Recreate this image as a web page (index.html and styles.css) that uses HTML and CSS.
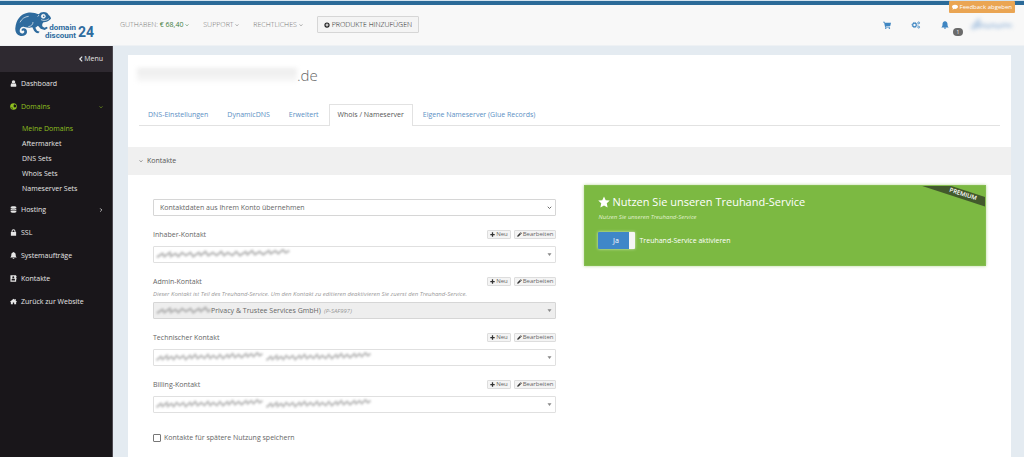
FILE: index.html
```html
<!DOCTYPE html>
<html lang="de">
<head>
<meta charset="utf-8">
<meta name="viewport" content="width=device-width, initial-scale=1">
<title>Whois / Nameserver – domaindiscount24</title>
<link rel="stylesheet" href="styles.css">
</head>
<body>
<svg class="sprite" aria-hidden="true">
  <symbol id="i-down" viewBox="0 0 10 10"><path d="M1.500 3.500 5 7l3.500-3.500" fill="none" stroke="currentColor" stroke-width="1.600"/></symbol>
  <symbol id="i-left" viewBox="0 0 10 10"><path d="M7 1 3 5l4 4" fill="none" stroke="currentColor" stroke-width="2"/></symbol>
  <symbol id="i-right" viewBox="0 0 10 10"><path d="M3 1l4 4-4 4" fill="none" stroke="currentColor" stroke-width="2"/></symbol>
  <symbol id="i-plus-circle" viewBox="0 0 16 16"><path fill-rule="evenodd" d="M8 1a7 7 0 1 0 0 14A7 7 0 0 0 8 1zM6.500 4h3v2.500h2.500v3H9.500V12h-3V9.500H4v-3h2.500z"/></symbol>
  <symbol id="i-cart" viewBox="0 0 16 16"><path d="M0 1.500h3.300l.5 1.800H16l-1.500 6.500-9 .9.200 1H14v1.500H4.300L2.200 3H0z"/><circle cx="5.500" cy="14.300" r="1.500"/><circle cx="12.800" cy="14.300" r="1.500"/></symbol>
  <symbol id="i-cogs" viewBox="0 0 18 16"><g fill="none" stroke="currentColor"><circle cx="6" cy="8" r="3.600" stroke-width="2.400"/><circle cx="6" cy="8" r="5.200" stroke-width="1.600" stroke-dasharray="2 2.080"/><circle cx="14.300" cy="3.800" r="1.900" stroke-width="1.700"/><circle cx="14.300" cy="12.200" r="1.900" stroke-width="1.700"/></g></symbol>
  <symbol id="i-bell" viewBox="0 0 16 16"><path d="M8 0c.8 0 1.200.5 1.200 1.200C11.800 1.800 13 4 13 6.500c0 3.500 1 5 2.500 6.300H.5C2 11.500 3 10 3 6.500 3 4 4.200 1.800 6.800 1.200 6.800.5 7.200 0 8 0zM6 13.500h4c0 1.300-.9 2.200-2 2.200s-2-.9-2-2.200z"/></symbol>
  <symbol id="i-comment" viewBox="0 0 16 16"><path d="M8 2c4.400 0 8 2.400 8 5.500S12.400 13 8 13c-.8 0-1.500 0-2.200-.2C4.500 14 3 15 1 15c1-1 1.500-2 1.400-3.500C.9 10.500 0 9 0 7.500 0 4.400 3.600 2 8 2z"/></symbol>
  <symbol id="i-user" viewBox="0 0 16 16"><circle cx="8" cy="4.500" r="4"/><path d="M4.500 7.500C2 8 1.500 11 1.500 13.500c0 1.300.8 2 2 2h9c1.200 0 2-.7 2-2 0-2.500-.5-5.500-3-6-2 2-5 2-7 0z"/></symbol>
  <symbol id="i-globe" viewBox="0 0 16 16"><circle cx="8" cy="8" r="7.500"/><path d="M9.500 3l4 1.500.5 4-2.500 2L9 9.500 8 6zM3 9.500l2.500 1 .5 3-2-1z" fill="#19161a"/></symbol>
  <symbol id="i-database" viewBox="0 0 16 16"><path d="M1.500 3C1.500 0 14.500 0 14.500 3v1.200c0 3-13 3-13 0zM1.500 6c3 2 10 2 13 0v2.200c0 3-13 3-13 0zM1.500 10c3 2 10 2 13 0v3.200c0 3-13 3-13 0z"/></symbol>
  <symbol id="i-lock" viewBox="0 0 16 16"><path fill-rule="evenodd" d="M2 7h1.500V5a4.500 4.500 0 0 1 9 0v2H14v8.500H2zM5.800 7h4.400V5a2.200 2.200 0 0 0-4.400 0z"/></symbol>
  <symbol id="i-book" viewBox="0 0 16 16"><path fill-rule="evenodd" d="M1 .5h13v15H1zM7.500 3a2.300 2.300 0 1 0 0 4.600A2.300 2.300 0 0 0 7.500 3zM3.500 12.500h8c0-3-1-4-2-4.300-1.200.8-2.800.8-4 0-1 .3-2 1.300-2 4.300z"/><path d="M15 2h1v3h-1zM15 7h1v3h-1z"/></symbol>
  <symbol id="i-home" viewBox="0 0 16 16"><path d="M8 1.500l3 2.600V2.500h2v3.400l3 2.600-1 1-1-.8V14.500H9.500v-4h-3v4H2V8.700l-1 .8-1-1z"/></symbol>
  <symbol id="i-plus" viewBox="0 0 16 16"><path d="M6 1h4v5h5v4h-5v5H6v-5H1V6h5z"/></symbol>
  <symbol id="i-pencil" viewBox="0 0 16 16"><path d="M12 .5 15.500 4 13.500 6 10 2.500zM9 3.500 12.500 7 5 14.500.5 15.500l1-4.500z"/></symbol>
  <symbol id="i-star" viewBox="0 0 16 16"><path d="M8 .5l2.300 5 5.400.6-4 3.700 1.100 5.500L8 12.600l-4.800 2.700 1.100-5.500-4-3.700 5.400-.6z"/></symbol>
  <symbol id="i-caret" viewBox="0 0 10 10"><path d="M1 2.500h8L5 8z"/></symbol>
  <symbol id="scribble" viewBox="0 0 150 12" preserveAspectRatio="none"><path d="M2 9l6-4 2 3 6-4 1 4 5-3 3 3 4-4 4 3 5-3 3 4 6-4 2 3 5-4 3 4 5-3 4 3 5-4 3 4 4-3 5 3 4-4 4 4 6-4 2 3 5-4 3 4 5-3 4 3 6-4 2 3 5-3 3 3 5-4 3 3 4-2" fill="none" stroke="currentColor" stroke-width="2.500"/></symbol>
</svg>

<header class="topbar">
  <a class="logo" href="#" aria-label="domaindiscount24">
    <svg class="chameleon" viewBox="0 0 108 78" aria-hidden="true">
      <path d="M1 48C3 24 16 6 38 2c14-2 24 2 34 5 2-5 8-7 14-7 7 0 13 3 15 9 4 3 7 7 7 11-5 6-13 10-22 11-4 3-5 7-4 12l6 4 8-3 2 5-9 5-12-4-8-9-8 6 5 9 8 3-4 5c-7 0-13-5-15-12l-3-6c-8 2-16 1-24-1-8-2-14 4-14 12 0 9 13 10 14 2 0-4-5-5-7-2-4-5 2-9 7-8 9 2 11 14 3 20C18 77-1 68 1 48z"/>
      <path class="cut" d="M40 44c8-1 14-6 14-14M15 31c5-11 15-17 26-18M78 23c7 4 17 3 24-3M72 9l-4 5"/>
      <circle class="cut eye" cx="85" cy="13" r="6"/><circle cx="86" cy="13" r="2.500"/>
    </svg>
    <span class="logo-name"><span>domain</span><span>discount</span></span>
    <span class="logo-num">24</span>
  </a>
  <nav class="topnav" aria-label="Konto">
    <a href="#">GUTHABEN: <b>€ 68,40</b> <svg class="ic tiny green"><use href="#i-down"/></svg></a>
    <a href="#">SUPPORT <svg class="ic tiny"><use href="#i-down"/></svg></a>
    <a href="#">RECHTLICHES <svg class="ic tiny"><use href="#i-down"/></svg></a>
    <button class="add" type="button"><svg class="ic small"><use href="#i-plus-circle"/></svg>PRODUKTE HINZUFÜGEN</button>
  </nav>
  <div class="tools">
    <a href="#" aria-label="Warenkorb"><svg class="ic tool"><use href="#i-cart"/></svg></a>
    <a href="#" aria-label="Einstellungen"><svg class="ic tool wide"><use href="#i-cogs"/></svg></a>
    <a class="bell" href="#" aria-label="Benachrichtigungen"><svg class="ic tool"><use href="#i-bell"/></svg><span class="badge">1</span></a>
    <a class="account" href="#" aria-label="Benutzerkonto"><svg viewBox="0 0 46 14"><path d="M3 11l6-7v6" fill="none" stroke="currentColor" stroke-width="4"/><path d="M9 9l5-2 5 2 5-2 5 2 6-2 8 1" fill="none" stroke="currentColor" stroke-width="3"/></svg></a>
  </div>
  <button class="feedback" type="button"><svg class="ic small"><use href="#i-comment"/></svg>Feedback abgeben</button>
</header>

<div class="shell">
  <nav class="sidebar" aria-label="Hauptmenü">
    <button class="menu-toggle" type="button"><svg class="ic small"><use href="#i-left"/></svg>Menu</button>
    <ul class="menu">
      <li><a href="#"><svg class="ic item"><use href="#i-user"/></svg>Dashboard</a></li>
      <li class="open"><a href="#"><svg class="ic item"><use href="#i-globe"/></svg>Domains<svg class="ic tiny end"><use href="#i-down"/></svg></a>
        <ul class="submenu">
          <li><a class="current" href="#">Meine Domains</a></li>
          <li><a href="#">Aftermarket</a></li>
          <li><a href="#">DNS Sets</a></li>
          <li><a href="#">Whois Sets</a></li>
          <li><a href="#">Nameserver Sets</a></li>
        </ul>
      </li>
      <li><a href="#"><svg class="ic item"><use href="#i-database"/></svg>Hosting<svg class="ic tiny end"><use href="#i-right"/></svg></a></li>
      <li><a href="#"><svg class="ic item"><use href="#i-lock"/></svg>SSL</a></li>
      <li><a href="#"><svg class="ic item"><use href="#i-bell"/></svg>Systemaufträge</a></li>
      <li><a href="#"><svg class="ic item"><use href="#i-book"/></svg>Kontakte</a></li>
      <li><a href="#"><svg class="ic item"><use href="#i-home"/></svg>Zurück zur Website</a></li>
    </ul>
  </nav>

  <main class="card">
    <h1><span class="masked-name"></span>.de</h1>
    <nav class="tabs" aria-label="Domain">
      <a href="#">DNS-Einstellungen</a>
      <a href="#">DynamicDNS</a>
      <a href="#">Erweitert</a>
      <a class="active" href="#" aria-current="page">Whois / Nameserver</a>
      <a href="#">Eigene Nameserver (Glue Records)</a>
    </nav>
    <h2 class="section-head"><svg class="ic tiny"><use href="#i-down"/></svg>Kontakte</h2>

    <div class="columns">
      <form class="contacts">
        <div class="pick source">
          <select aria-label="Kontaktdaten"><option>Kontaktdaten aus Ihrem Konto übernehmen</option></select>
          <svg class="ic arrow"><use href="#i-down"/></svg>
        </div>

        <div class="field">
          <div class="field-head"><label for="owner">Inhaber-Kontakt</label>
            <button type="button"><svg class="ic micro"><use href="#i-plus"/></svg>Neu</button>
            <button type="button"><svg class="ic micro"><use href="#i-pencil"/></svg>Bearbeiten</button></div>
          <div class="pick"><select id="owner"><option></option></select>
            <svg class="masked" viewBox="0 0 150 12" preserveAspectRatio="none"><use href="#scribble"/></svg>
            <svg class="ic arrow caret"><use href="#i-caret"/></svg></div>
        </div>

        <div class="field">
          <div class="field-head"><label for="admin">Admin-Kontakt</label>
            <button type="button"><svg class="ic micro"><use href="#i-plus"/></svg>Neu</button>
            <button type="button"><svg class="ic micro"><use href="#i-pencil"/></svg>Bearbeiten</button></div>
          <p class="hint">Dieser Kontakt ist Teil des Treuhand-Service. Um den Kontakt zu editieren deaktivieren Sie zuerst den Treuhand-Service.</p>
          <div class="pick locked"><select id="admin" disabled><option>Privacy &amp; Trustee Services GmbH)</option></select>
            <svg class="masked" viewBox="0 0 60 12" preserveAspectRatio="none"><use href="#scribble" width="150" height="12"/></svg>
            <i class="handle">(P-SAF997)</i>
            <svg class="ic arrow caret"><use href="#i-caret"/></svg></div>
        </div>

        <div class="field">
          <div class="field-head"><label for="tech">Technischer Kontakt</label>
            <button type="button"><svg class="ic micro"><use href="#i-plus"/></svg>Neu</button>
            <button type="button"><svg class="ic micro"><use href="#i-pencil"/></svg>Bearbeiten</button></div>
          <div class="pick long"><select id="tech"><option></option></select>
            <svg class="masked" viewBox="0 0 220 12" preserveAspectRatio="none"><use href="#scribble" width="112" height="12"/><use href="#scribble" x="110" width="110" height="12"/></svg>
            <svg class="ic arrow caret"><use href="#i-caret"/></svg></div>
        </div>

        <div class="field">
          <div class="field-head"><label for="billing">Billing-Kontakt</label>
            <button type="button"><svg class="ic micro"><use href="#i-plus"/></svg>Neu</button>
            <button type="button"><svg class="ic micro"><use href="#i-pencil"/></svg>Bearbeiten</button></div>
          <div class="pick long"><select id="billing"><option></option></select>
            <svg class="masked" viewBox="0 0 220 12" preserveAspectRatio="none"><use href="#scribble" width="112" height="12"/><use href="#scribble" x="110" width="110" height="12"/></svg>
            <svg class="ic arrow caret"><use href="#i-caret"/></svg></div>
        </div>

        <label class="save"><input type="checkbox">Kontakte für spätere Nutzung speichern</label>
      </form>

      <section class="promo">
        <span class="ribbon">PREMIUM</span>
        <h3><svg class="ic star"><use href="#i-star"/></svg>Nutzen Sie unseren Treuhand-Service</h3>
        <p>Nutzen Sie unseren Treuhand-Service</p>
        <label class="switch"><input type="checkbox" checked><span class="track">Ja</span>Treuhand-Service aktivieren</label>
      </section>
    </div>
  </main>
</div>
</body>
</html>
```
FILE: styles.css
```css
* { box-sizing: border-box; }
body {
  margin: 0;
  min-height: 100vh;
  display: flex;
  flex-direction: column;
  background: #e4ebf1;
  color: #666;
  font: 7px/10px "Open Sans", sans-serif;
}
a { color: inherit; text-decoration: none; }
button, select, input { font: inherit; color: inherit; margin: 0; }
ul { list-style: none; margin: 0; padding: 0; }
h1, h2, h3, p { margin: 0; font-weight: 400; }
.sprite { position: absolute; width: 0; height: 0; }
.ic { display: inline-block; flex: none; fill: currentColor; }
.micro { width: 5px; height: 5px; }
.tiny { width: 4px; height: 4px; }
.small { width: 6px; height: 6px; }
.item { width: 7px; height: 7px; }

/* top bar */
.topbar {
  position: relative;
  display: flex;
  align-items: center;
  height: 46px;
  padding: 6px 9px 2px 15px;
  background: linear-gradient(#d3e3ef 1px, #2b6a98 1px, #2b6a98 5px, #f8f8f8 5px);
  border-bottom: 1px solid #eef1f4;
}
.logo { position: relative; display: flex; width: 105px; height: 30px; color: #2e6b9e; font-family: Roboto, sans-serif; font-weight: 700; }
.chameleon { position: absolute; left: 0; top: 2px; width: 36px; height: 26px; fill: #2e6b9e; }
.chameleon .cut { fill: none; stroke: #f8f8f8; stroke-width: 2; }
.chameleon .eye { fill: #f8f8f8; }
.logo-name { position: relative; display: flex; flex-direction: column; align-items: flex-end; width: 61px; padding-top: 14px; font-size: 8px; line-height: 8px; }
.logo-num { padding: 14px 0 0 2px; font-size: 14px; line-height: 16px; }
.topnav { display: flex; align-items: center; gap: 14px; color: #777; font-weight: 300; }
.topnav b { color: #3e7d3e; }
.topnav .green { color: #3e7d3e; }
.add {
  display: flex; align-items: center; gap: 2px; height: 17px; padding: 0 6px;
  background: #f4f4f4; border: 1px solid #d6d6d6; border-radius: 1px; color: #222;
}
.tools { display: flex; align-items: center; gap: 20px; margin-left: auto; color: #3f86c2; }
.tools a { display: flex; }
.tool { width: 8px; height: 8px; }
.wide { width: 10px; }
.bell { position: relative; }
.badge {
  position: absolute; left: 12px; top: 7px; width: 10px; height: 8px;
  border-radius: 4px; background: #6b6b6b; color: #fff; font-size: 5px; line-height: 8px; text-align: center;
}
.account svg { width: 46px; height: 14px; color: #8db1d8; opacity: .6; filter: blur(2px); }
.feedback {
  position: absolute; right: 9px; top: 1px; display: flex; align-items: center; gap: 2px;
  height: 12px; padding: 0 3px; border: 0; border-radius: 1px; background: #eaa553; color: #fff; font-size: 6px;
}

/* side menu */
.shell { flex: 1; display: flex; }
.sidebar { width: 113px; flex: none; background: #19161a; border-right: 1px solid #4d4950; color: #e6e6e6; }
.menu-toggle {
  display: flex; align-items: center; justify-content: flex-end; width: 100%; height: 26px; padding: 0 9px;
  background: #2e2930; border: 0; color: #e6e6e6;
}
.menu a { display: flex; align-items: center; gap: 4px; height: 23px; padding: 0 9px 0 10px; }
.menu .end { margin-left: auto; }
.open > a, .submenu .current { color: #8fc01f; }
.submenu { padding: 3px 0 2px; }
.menu .submenu a { height: 15px; padding-left: 22px; }

/* page card */
.card { flex: 1; min-width: 0; margin: 9px 13px 0 15px; padding-bottom: 14px; background: #fff; }
h1 { display: flex; align-items: center; padding: 10px 9px 0; font-size: 15px; line-height: 20px; color: #666; font-weight: 300; }
.masked-name { width: 160px; height: 14px; background: linear-gradient(#ececec, #f8f8f8); filter: blur(2px); }
.tabs { display: flex; gap: 1px; margin: 19px 11px 0; border-bottom: 1px solid #e2e2e2; color: #5b8fc4; }
.tabs a { padding: 5px 8px; border: 1px solid transparent; border-bottom: 0; }
.tabs .active { margin-bottom: -1px; padding-bottom: 6px; border-color: #e2e2e2; background: #fff; color: #555; }
.section-head {
  display: flex; align-items: center; gap: 4px; height: 28px; margin-top: 21px; padding: 0 11px;
  background: #f0f0f0; font-size: 7px; line-height: 10px; color: #555;
}
.columns { display: grid; grid-template-columns: 404fr 402fr; gap: 28px; align-items: start; padding: 10px 25px 0; }

/* contact form */
.contacts { display: flex; flex-direction: column; gap: 13px; padding-top: 14px; }
.pick { position: relative; display: flex; }
.pick select {
  appearance: none; flex: 1; height: 17px; padding: 0 6px; border: 1px solid #e0e0e0; border-radius: 1px;
  background: #fff; opacity: 1;
}
.pick.source select { border-color: #d6d6d6; }
.arrow { position: absolute; right: 4px; top: 6px; width: 5px; height: 5px; color: #444; }
.caret { color: #888; }
.masked { position: absolute; left: 2px; top: 3px; width: 140px; height: 11px; color: #888; filter: blur(1px); opacity: .55; }
.long .masked { width: 220px; }
.pick.locked select { padding-left: 57px; background: #eee; border-color: #d6d6d6; }
.locked .masked { width: 56px; }
.handle { position: absolute; left: 171px; top: 4px; font-size: 6px; color: #999; }
.field-head { display: flex; align-items: center; gap: 3px; height: 11px; margin-bottom: 6px; }
.field-head label { margin-right: auto; }
.field-head button {
  display: flex; align-items: center; gap: 1px; height: 9px; padding: 0 2px;
  background: #f4f4f4; border: 1px solid #ddd; border-radius: 1px; font-size: 6px; line-height: 7px;
}
.field-head .ic { color: #333; }
.hint { margin: -4px 0 3px; font-size: 6px; line-height: 10px; font-style: italic; color: #999; }
.save { display: flex; align-items: center; gap: 3px; margin-top: 7px; }
.save input { appearance: none; width: 8px; height: 8px; border: 1px solid #777; border-radius: 1px; background: #fff; }

/* promo box */
.promo {
  position: relative; overflow: hidden; padding: 8px 13px 16px; color: #fff;
  background: #7cb942; border: 1px solid #84bd4f;
  box-shadow: 0 0 3px #b5d593;
}
.promo h3 { display: flex; align-items: center; gap: 2px; font-size: 11px; line-height: 16px; }
.star { width: 12px; height: 12px; }
.promo p { margin-bottom: 8px; font-size: 6px; line-height: 14px; font-style: italic; color: #e0f0d0; }
.switch { display: flex; align-items: center; gap: 4px; }
.switch input { position: absolute; opacity: 0; }
.track {
  width: 37px; height: 17px; border-right: 6px solid #f5f5f5; border-radius: 1px; background: #3f87c8;
  line-height: 17px; text-align: center; padding-left: 4px; box-shadow: 0 0 3px #d8ebc5;
}
.ribbon {
  position: absolute; right: -22px; top: 4px; width: 88px; height: 9px; transform: rotate(18deg);
  background: #42592c; font-size: 6px; line-height: 9px; font-weight: 600; text-align: center;
}
```
